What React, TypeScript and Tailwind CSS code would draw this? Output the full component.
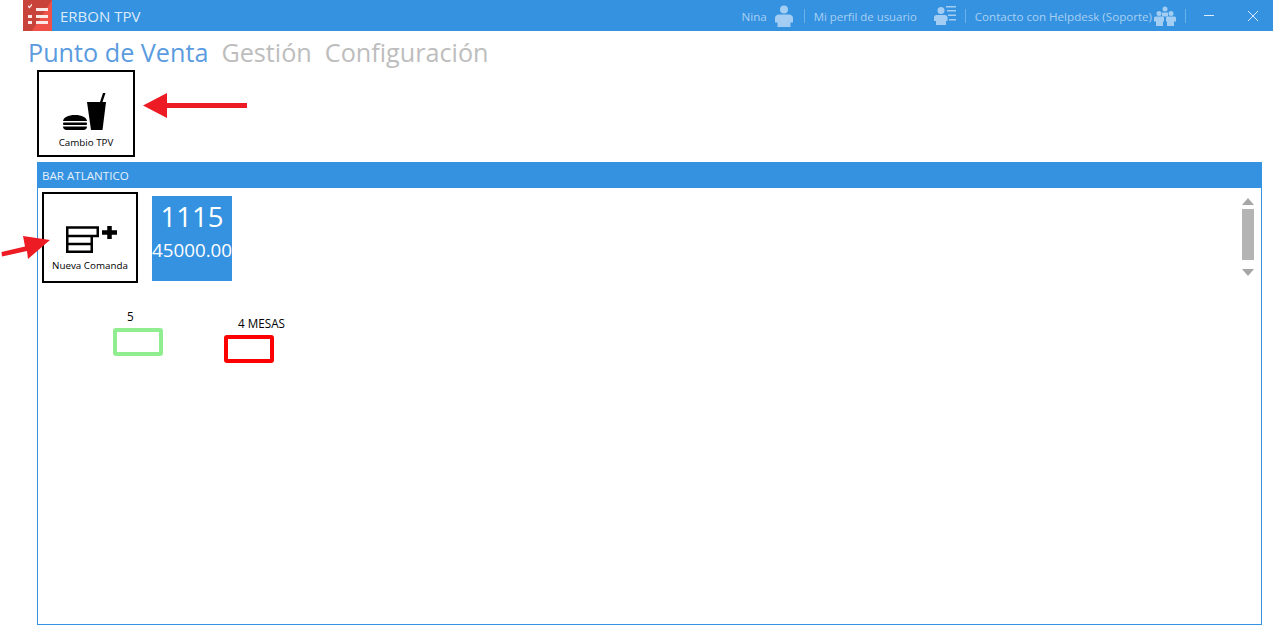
import * as React from "react";

const font = { fontFamily: '"Open Sans", "Noto Sans", sans-serif' };

function LogoIcon() {
  return (
    <svg className="shrink-0" width="29" height="31" viewBox="0 0 29 31">
      <rect width="29" height="31" fill="#c8443a" />
      <path d="M29 0v31H9z" fill="#ef5148" />
      <g fill="#fbe9e7">
        <path d="M5 5l1.500 1.500L9 3.500v2L6.500 8.500 5 7z" />
        <rect x="13" y="8" width="12" height="3" />
        <rect x="5" y="15" width="4" height="3" />
        <rect x="13" y="15" width="12" height="3" />
        <rect x="5" y="21" width="4" height="3" />
        <rect x="13" y="21" width="12" height="3" />
      </g>
    </svg>
  );
}

function PersonIcon() {
  return (
    <svg width="18" height="22" viewBox="0 0 18 22" fill="#a3cdf2">
      <circle cx="9" cy="4.500" r="4" />
      <path d="M4 9.500h10c2 0 4 1.500 4 3.500v4.500h-2.500V22h-13v-4.500H0V13c0-2 2-3.500 4-3.500z" />
    </svg>
  );
}

function ProfileIcon() {
  return (
    <svg width="22" height="19" viewBox="0 0 22 19" fill="#a3cdf2">
      <circle cx="7" cy="4.500" r="3.500" />
      <path d="M2.500 9h8.500c1.500 0 2.500 1 2.500 2.500V15H12v4H2v-4H0v-3.500C0 10 1 9 2.500 9z" />
      <rect x="12" y="0" width="10" height="1.500" />
      <rect x="13" y="4" width="9" height="1.500" />
      <rect x="14" y="8.500" width="8" height="1.500" />
      <rect x="15" y="13" width="7" height="1.500" />
    </svg>
  );
}

function GroupIcon() {
  return (
    <svg width="22" height="20" viewBox="0 0 22 20" fill="#a3cdf2">
      <circle cx="11" cy="3" r="2.500" />
      <circle cx="5" cy="7.500" r="2.500" />
      <circle cx="17" cy="7.500" r="2.500" />
      <path d="M8 6.500h6v4h-6z" />
      <path d="M1.500 10.500h7c1 0 1.500.8 1.500 1.500v3.500H9V20H2v-4.500H0V12c0-.7.500-1.500 1.500-1.500z" />
      <path d="M13.500 10.500h7c1 0 1.500.8 1.500 1.500v3.500h-2V20h-7v-4.500h-1V12c0-.7.500-1.500 1.500-1.500z" />
    </svg>
  );
}

function FoodIcon() {
  return (
    <svg className="ml-[-3px]" width="44" height="37" viewBox="0 0 44 37" fill="#000">
      <path d="M24 9h19l-3.500 28H28z" />
      <path d="M37 9l3-9h2.500l-3 9z" />
      <path d="M0 28C.5 24.500 5 22 12 22s11.500 2.500 12 6z" />
      <rect x="0" y="29.500" width="24" height="2.500" rx="1" />
      <path d="M0 33.500h24c0 2-1.500 3.500-3.500 3.500h-17C1.500 37 0 35.500 0 33.500z" />
    </svg>
  );
}

function OrderIcon() {
  return (
    <svg className="ml-[3px]" width="51" height="27" viewBox="0 0 51 27" fill="none" stroke="#000" strokeWidth="2.500">
      <path d="M1.250 1.500h30.500v8.500H1.250zM1.250 10h24.500v8H1.250zM1.250 18h24.500v7.750H1.250z" />
      <path d="M43.500 0v13M36 6.500h15" strokeWidth="4.500" />
    </svg>
  );
}

function Tile({ label, children, className }: { label: string; children: React.ReactNode; className: string }) {
  return (
    <button type="button" className={`flex flex-col items-center border-2 border-black bg-white ${className}`}>
      {children}
      <span className="mt-[6px] text-[9.800px] font-medium leading-[13px] text-black">{label}</span>
    </button>
  );
}

function HeaderLink({ label, className, children }: { label: string; className: string; children: React.ReactNode }) {
  return (
    <div className={`flex items-center text-[#a9d0f3] ${className}`}>
      <span className="pt-[2px]">{label}</span>
      {children}
    </div>
  );
}

export default function App() {
  return (
    <div className="relative h-[630px] w-[1273px] overflow-hidden bg-white" style={font}>
      <header className="ml-[23px] flex h-[31px] items-center bg-[#3492e0]">
        <LogoIcon />
        <span className="ml-2 pt-[2px] text-[15px] text-[#dcecfa]">ERBON TPV</span>
        <div className="ml-auto flex items-center">
          <HeaderLink label="Nina" className="text-[11.600px]">
            <span className="ml-2"><PersonIcon /></span>
          </HeaderLink>
          <div className="ml-[11px] mr-[9px] h-[14px] w-px bg-[#6db1ea]" />
          <HeaderLink label="Mi perfil de usuario" className="text-[11.400px]">
            <span className="ml-[17px]"><ProfileIcon /></span>
          </HeaderLink>
          <div className="ml-[9px] mr-[9px] h-[14px] w-px bg-[#6db1ea]" />
          <HeaderLink label="Contacto con Helpdesk (Soporte)" className="text-[11.600px]">
            <span className="ml-[2px]"><GroupIcon /></span>
          </HeaderLink>
          <div className="ml-[9px] h-[14px] w-px bg-[#6db1ea]" />
          <div className="ml-[18px] h-px w-[10px] bg-[#dcecfa]" />
          <svg className="ml-[34px] mr-[15px]" width="10" height="10" viewBox="0 0 10 10" stroke="#dcecfa" strokeWidth="1">
            <path d="M0 0l10 10M10 0L0 10" />
          </svg>
        </div>
      </header>

      <nav className="ml-[28px] mt-[3px] flex h-[36px] items-center gap-[13px] text-[25.200px] leading-[36px]">
        <span className="text-[#5b9be0]">Punto de Venta</span>
        <span className="text-[#bdbdbd]">Gestión</span>
        <span className="text-[#bdbdbd]">Configuración</span>
      </nav>

      <div className="ml-[37px]">
        <Tile label="Cambio TPV" className="h-[87px] w-[98px] pt-[21px]">
          <FoodIcon />
        </Tile>
      </div>

      <section className="ml-[37px] mt-[5px] h-[463px] w-[1225px] border border-[#3492e0]">
        <div className="-mx-px -mt-px flex h-[26px] items-center bg-[#3492e0] pl-[5px] pt-px text-[11.600px] text-[#e4f0fb]">
          BAR ATLANTICO
        </div>
        <div className="relative flex h-[436px] items-start pl-1 pt-1">
          <Tile label="Nueva Comanda" className="h-[91px] w-[96px] pt-[32px]">
            <OrderIcon />
          </Tile>
          <div className="ml-[14px] mt-1 flex h-[85px] w-[80px] flex-col items-center overflow-hidden whitespace-nowrap bg-[#3492e0] text-white">
            <span className="mt-[1px] text-[27.500px] leading-[40px]">1115</span>
            <span className="mt-[1px] text-[18.800px] leading-[24px]">45000.00</span>
          </div>

          <div className="ml-auto mr-[7px] mt-[6px] flex w-[12px] flex-col items-center">
            <div className="h-0 w-0 border-x-[6px] border-b-[7px] border-x-transparent border-b-[#a6a6a6]" />
            <div className="mt-[4px] h-[51px] w-[12px] bg-[#b4b4b4]" />
            <div className="mt-[9px] h-0 w-0 border-x-[6px] border-t-[7px] border-x-transparent border-t-[#a6a6a6]" />
          </div>

          <span className="absolute left-[89px] top-[121px] text-[11.700px] leading-[15px] text-black">5</span>
          <div className="absolute left-[75px] top-[140px] h-[28px] w-[50px] rounded-[3px] border-[4px] border-[#90ee90]" />
          <span className="absolute left-[200px] top-[128px] text-[11.700px] leading-[15px] text-black">4 MESAS</span>
          <div className="absolute left-[186px] top-[147px] h-[28px] w-[50px] rounded-[3px] border-[4px] border-[#ff0000]" />
        </div>
      </section>

      <svg className="absolute left-[142px] top-[93px]" width="106" height="26" viewBox="0 0 106 26" fill="#ed1c24">
        <path d="M1 12.500L25 0v10h80v5H25v10z" />
      </svg>
      <svg className="absolute left-0 top-[234px]" width="52" height="26" viewBox="0 0 52 26" fill="#ed1c24">
        <path d="M50 6L28 25l-1-8-25 5.500L1.500 18 25 12.500 23 2z" />
      </svg>
    </div>
  );
}
